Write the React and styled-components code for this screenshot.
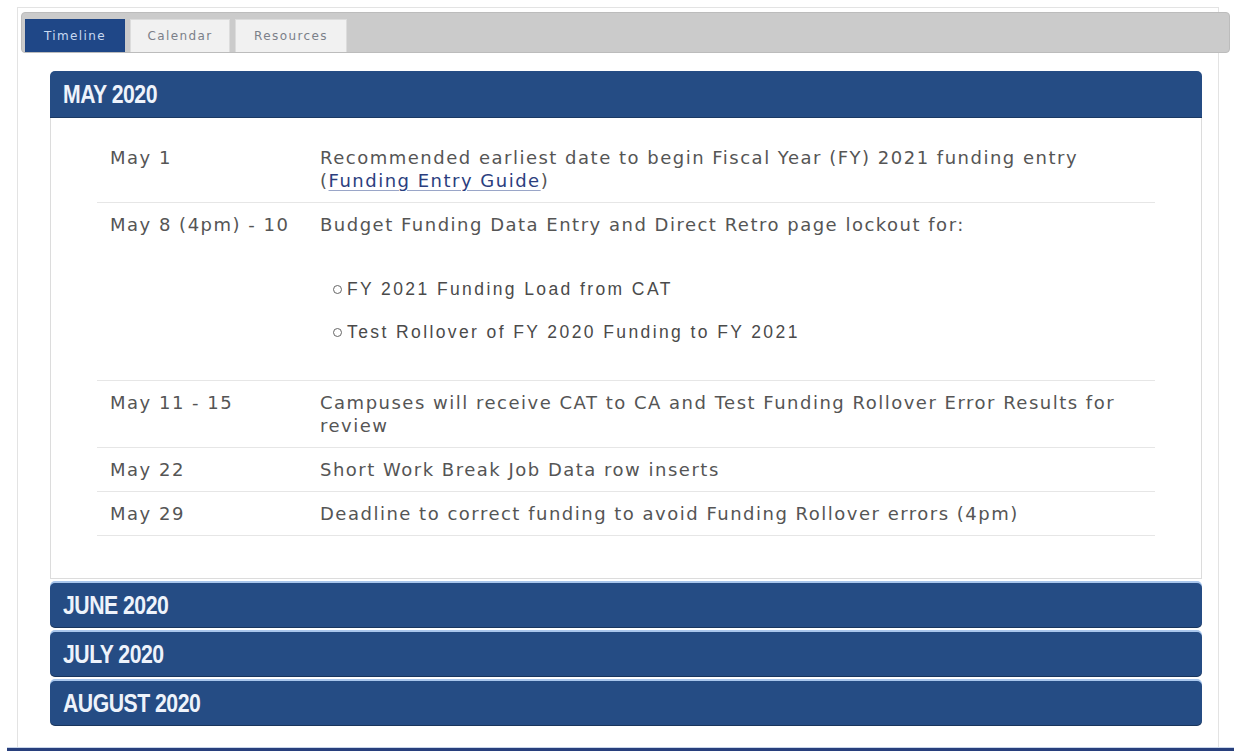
import React from "react";
import styled, { createGlobalStyle } from "styled-components";

const GlobalStyle = createGlobalStyle`
  html, body {
    margin: 0;
    padding: 0;
    background: #ffffff;
  }
  body {
    font-family: "DejaVu Sans", Verdana, sans-serif;
    color: #555;
  }
  * { box-sizing: border-box; }
`;

const Page = styled.div`
  width: 1234px;
  height: 751px;
  padding-top: 7px;
  overflow: hidden;
`;

const Frame = styled.div`
  margin-left: 17px;
  width: 1202px;
  border: 1px solid #e3e3e3;
  border-bottom: none;
`;

const TabBar = styled.div`
  display: flex;
  align-items: flex-end;
  gap: 5px;
  height: 41px;
  margin: 4px -12px 0 3px;
  padding-left: 3px;
  background: #cbcbcb;
  border: 1px solid #bcbcbc;
  border-radius: 4px;
`;

const Tab = styled.button`
  width: ${(p) => p.$w}px;
  height: 33px;
  padding: 0;
  border: 1px solid ${(p) => (p.$active ? "#1d4483" : "#dcdcdc")};
  border-bottom: none;
  background: ${(p) => (p.$active ? "#1f4787" : "#f1f1f1")};
  color: ${(p) => (p.$active ? "#c9daf2" : "#7b8089")};
  font-family: "DejaVu Sans", Verdana, sans-serif;
  font-size: 12px;
  letter-spacing: 1.4px;
  cursor: pointer;
`;

const Content = styled.div`
  padding: 18px 16px 21px 32px;
`;

const MonthHeader = styled.div`
  display: flex;
  align-items: center;
  height: ${(p) => (p.$open ? 47 : 45)}px;
  padding-left: 13px;
  background: #254c84;
  border-radius: ${(p) => (p.$open ? "5px 5px 0 0" : "5px")};
  box-shadow: ${(p) =>
    p.$open
      ? "inset 0 -1px 0 rgba(0,0,0,0.25)"
      : "0 -2px 0 #a9c6ec, inset 0 -1px 0 rgba(0,0,0,0.3)"};
`;

/* narrow, tall display lettering for the month titles */
const MonthTitle = styled.span`
  display: inline-block;
  transform: scaleX(0.85);
  transform-origin: left center;
  white-space: nowrap;
  color: #eef3fb;
  font-family: "Liberation Sans", Arial, sans-serif;
  font-weight: 700;
  font-size: 25px;
  letter-spacing: -0.6px;
`;

const MonthBody = styled.div`
  padding: 18px 46px 42px 46px;
  border: 1px solid #dcdcdc;
  border-top: none;
`;

const Row = styled.div`
  display: grid;
  grid-template-columns: 223px 1fr;
  padding: 10px 0;
  border-bottom: 1px solid #e6e6e6;
  font-size: 18px;
  line-height: 23px;
  letter-spacing: 1.5px;
  color: #555;
`;

const DateCell = styled.div`
  padding-left: 13px;
`;

const DescCell = styled.div`
  padding-right: 13px;
`;

const Link = styled.a`
  color: #2b3e7e;
  text-decoration: underline;
  text-decoration-color: #9aa6c8;
  text-underline-offset: 3px;
`;

const SubList = styled.ul`
  list-style: none;
  margin: 43px 0 28px;
  padding-left: 13px;
`;

const SubItem = styled.li`
  display: flex;
  align-items: center;
  gap: 5px;
  font-family: "Liberation Sans", Arial, sans-serif;
  font-size: 17.5px;
  line-height: 20px;
  letter-spacing: 2.4px;
  color: #4a4a4a;
  & + & {
    margin-top: 23px;
  }
  &::before {
    content: "";
    width: 7px;
    height: 7px;
    border: 1px solid #666;
    border-radius: 50%;
    flex: none;
  }
`;

const Collapsed = styled.div`
  display: flex;
  flex-direction: column;
  gap: 4px;
  margin-top: 4px;
`;

const Footer = styled.div`
  height: 6px;
  margin-left: 7px;
  background: #283f7c;
  border-top: 1px solid #c9d6ea;
`;

const rows = [
  {
    date: "May 1",
    desc: (
      <>
        {"Recommended earliest date to begin Fiscal Year (FY) 2021 funding entry ("}
        <Link href="#">Funding Entry Guide</Link>
        {")"}
      </>
    ),
  },
  {
    date: "May 8 (4pm) - 10",
    desc: "Budget Funding Data Entry and Direct Retro page lockout for:",
    items: ["FY 2021 Funding Load from CAT", "Test Rollover of FY 2020 Funding to FY 2021"],
  },
  {
    date: "May 11 - 15",
    desc: "Campuses will receive CAT to CA and Test Funding Rollover Error Results for review",
  },
  { date: "May 22", desc: "Short Work Break Job Data row inserts" },
  { date: "May 29", desc: "Deadline to correct funding to avoid Funding Rollover errors (4pm)" },
];

const months = ["JUNE 2020", "JULY 2020", "AUGUST 2020"];

export default function App() {
  return (
    <Page>
      <GlobalStyle />
      <Frame>
        <TabBar>
          <Tab $active $w={100}>Timeline</Tab>
          <Tab $w={100}>Calendar</Tab>
          <Tab $w={112}>Resources</Tab>
        </TabBar>
        <Content>
          <MonthHeader $open>
            <MonthTitle>MAY 2020</MonthTitle>
          </MonthHeader>
          <MonthBody>
            {rows.map((r) => (
              <Row key={r.date}>
                <DateCell>{r.date}</DateCell>
                <DescCell>
                  {r.desc}
                  {r.items && (
                    <SubList>
                      {r.items.map((it) => (
                        <SubItem key={it}>{it}</SubItem>
                      ))}
                    </SubList>
                  )}
                </DescCell>
              </Row>
            ))}
          </MonthBody>
          <Collapsed>
            {months.map((m) => (
              <MonthHeader key={m}>
                <MonthTitle>{m}</MonthTitle>
              </MonthHeader>
            ))}
          </Collapsed>
        </Content>
      </Frame>
      <Footer />
    </Page>
  );
}
